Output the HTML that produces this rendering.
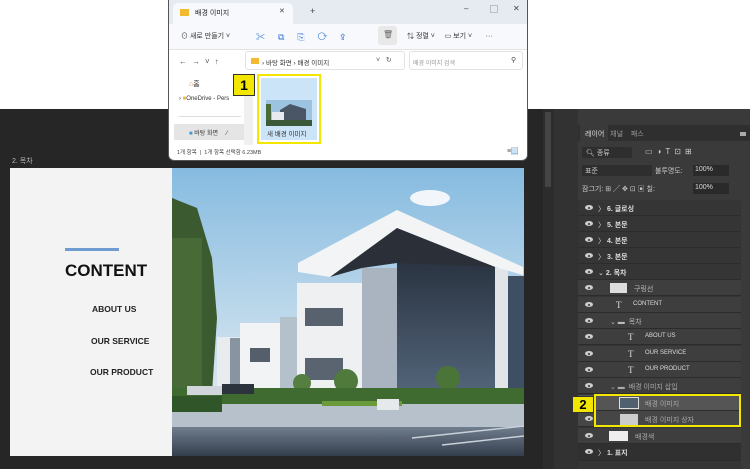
<!DOCTYPE html>
<html><head><meta charset="utf-8"><style>
*{margin:0;padding:0;box-sizing:border-box}
body{width:750px;height:469px;overflow:hidden;background:#fff;position:relative;font-family:"Liberation Sans","Noto Sans CJK KR",sans-serif}
.abs{position:absolute}
.dark{left:0;top:109px;width:750px;height:360px;background:#262626}
.t{position:absolute;white-space:nowrap}
.lay{position:absolute;left:578px;width:163px;height:16px;font-size:7px;color:#ddd;border-bottom:1px solid #2c2c2c}
.eye{position:absolute;left:7px;top:5px;width:8px;height:5px;border-radius:50%;background:#ccc}
.eye:after{content:"";position:absolute;left:3px;top:1.5px;width:2px;height:2px;background:#333;border-radius:50%}
</style></head><body>
<div class="abs dark"></div>
<div class="t" style="left:12px;top:156px;font-size:7px;color:#bbb">2. 목차</div>
<div class="abs" style="left:10px;top:168px;width:163px;height:288px;background:#f3f3f3"></div>
<div class="abs" style="left:65px;top:248px;width:54px;height:3px;background:#6f9bd0"></div>
<div class="t" style="left:65px;top:261px;font-size:17px;font-weight:bold;color:#111">CONTENT</div>
<div class="t" style="left:92px;top:304px;font-size:8.5px;font-weight:bold;color:#222">ABOUT US</div>
<div class="t" style="left:91px;top:336px;font-size:8.5px;font-weight:bold;color:#222">OUR SERVICE</div>
<div class="t" style="left:90px;top:367px;font-size:8.5px;font-weight:bold;color:#222">OUR PRODUCT</div>
<svg class="abs" style="left:172px;top:168px" width="352" height="288" viewBox="0 0 352 288">
<defs><linearGradient id="sky" x1="0" y1="0" x2="0" y2="1"><stop offset="0" stop-color="#86bbe0"/><stop offset="0.7" stop-color="#d2e3ef"/><stop offset="1" stop-color="#e4ecf2"/></linearGradient>
<linearGradient id="rd" x1="0" y1="0" x2="0" y2="1"><stop offset="0" stop-color="#6f7d8e"/><stop offset="1" stop-color="#343e4d"/></linearGradient>
<linearGradient id="gl" x1="0" y1="0" x2="0" y2="1"><stop offset="0" stop-color="#2a3442"/><stop offset="1" stop-color="#53657a"/></linearGradient></defs>
<rect width="352" height="288" fill="url(#sky)"/>
<ellipse cx="258" cy="30" rx="20" ry="8" fill="#f2f6fa"/>
<rect x="0" y="235" width="352" height="25" fill="#b6c1cb"/>
<rect x="0" y="259" width="352" height="29" fill="url(#rd)"/>
<polygon points="45,169 68,169 68,222 45,222" fill="#e9ecef"/>
<rect x="58" y="170" width="10" height="52" fill="#8894a0"/>
<rect x="68" y="155" width="40" height="66" fill="#f1f3f5"/>
<rect x="108" y="149" width="18" height="72" fill="#b4c0ca"/>
<rect x="78" y="180" width="20" height="14" fill="#555f6b"/>
<rect x="125" y="115" width="65" height="108" fill="#eef0f2"/>
<rect x="133" y="140" width="38" height="18" fill="#58626f"/>
<rect x="133" y="190" width="38" height="22" fill="#5a6470"/>
<rect x="190" y="100" width="35" height="125" fill="#a9b4c0"/>
<rect x="225" y="95" width="98" height="130" fill="url(#gl)"/>
<rect x="323" y="100" width="13" height="125" fill="#e1e5e8"/>
<rect x="336" y="108" width="16" height="117" fill="#3e4f63"/>
<polygon points="126,95 225,42 351,99 351,107 323,99 225,60 158,109 126,104" fill="#f3f4f5"/>
<polygon points="158,109 225,60 323,99 225,95 190,100" fill="#2b3038"/>
<polygon points="0,30 25,40 40,90 45,150 40,225 0,228" fill="#3b5a30"/>
<rect x="0" y="70" width="30" height="150" fill="#476a37"/>
<circle cx="174" cy="213" r="12" fill="#4f7a3c"/>
<circle cx="276" cy="210" r="12" fill="#4a7438"/>
<circle cx="130" cy="215" r="9" fill="#557f40"/>
<rect x="0" y="220" width="352" height="16" fill="#3f6a30"/>
<rect x="0" y="228" width="50" height="16" fill="#2f5528"/>
<rect x="150" y="233" width="80" height="5" fill="#6a9a3a"/>
<rect x="205" y="231" width="22" height="11" fill="#e6e9ec"/>
<rect x="15" y="218" width="35" height="9" fill="#d0d6dc"/>
<rect x="50" y="216" width="32" height="10" fill="#2d333c"/>
<path d="M240 270 L352 258 M270 277 L352 268" stroke="#c9d0d8" stroke-width="1.5"/>
</svg>
<div class="abs" style="left:543px;top:109px;width:11px;height:360px;background:#2c2c2c"></div>
<div class="abs" style="left:545px;top:112px;width:6px;height:75px;background:#444"></div>
<div class="abs" style="left:554px;top:109px;width:24px;height:360px;background:#323232"></div>
<div class="abs" style="left:578px;top:109px;width:172px;height:360px;background:#3a3a3a"></div>
<div class="abs" style="left:578px;top:125px;width:172px;height:16px;background:#2f2f2f"></div>
<div class="abs" style="left:580px;top:125px;width:28px;height:16px;background:#3a3a3a"></div>
<div class="t" style="left:585px;top:129px;font-size:7px;color:#ddd">레이어 &nbsp; <span style="color:#999">채널 &nbsp; &nbsp;패스</span></div>
<div class="abs" style="left:740px;top:132px;width:6px;height:4px;background:#aaa"></div>
<div class="abs" style="left:582px;top:147px;width:50px;height:11px;background:#2e2e2e;border-radius:2px"></div>
<div class="t" style="left:586px;top:148px;font-size:7px;color:#ccc">🔍︎ 종류</div>
<div class="t" style="left:645px;top:147px;font-size:8px;color:#ccc;letter-spacing:4px">▭◑T⊡⊞</div>
<div class="abs" style="left:582px;top:165px;width:70px;height:11px;background:#2e2e2e"></div>
<div class="t" style="left:585px;top:166px;font-size:7px;color:#ccc">표준</div>
<div class="t" style="left:655px;top:166px;font-size:7px;color:#ccc">불투명도:</div>
<div class="abs" style="left:693px;top:165px;width:36px;height:11px;background:#2a2a2a"></div>
<div class="t" style="left:695px;top:166px;font-size:7px;color:#ddd">100%</div>
<div class="t" style="left:582px;top:184px;font-size:7px;color:#ccc">잠그기: ⊞ ╱ ✥ ⊡ ▣ 칠:</div>
<div class="abs" style="left:693px;top:183px;width:36px;height:11px;background:#2a2a2a"></div>
<div class="t" style="left:695px;top:184px;font-size:7px;color:#ddd">100%</div>
<div class="abs" style="left:578px;top:200px;width:163px;height:269px;background:#353535"></div>

<div class="lay" style="top:200px"><i class="eye"></i><span class="t" style="left:20px;top:4px">〉 <b>6. 글로싱</b></span></div>
<div class="lay" style="top:216px"><i class="eye"></i><span class="t" style="left:20px;top:4px">〉 <b>5. 본문</b></span></div>
<div class="lay" style="top:232px"><i class="eye"></i><span class="t" style="left:20px;top:4px">〉 <b>4. 본문</b></span></div>
<div class="lay" style="top:248px"><i class="eye"></i><span class="t" style="left:20px;top:4px">〉 <b>3. 본문</b></span></div>
<div class="lay" style="top:264px"><i class="eye"></i><span class="t" style="left:20px;top:4px">⌄ <b>2. 목차</b></span></div>
<div class="lay" style="top:280px;background:#3e3e3e"><i class="eye"></i><span class="abs" style="left:32px;top:3px;width:17px;height:10px;background:#ddd"></span><span class="t" style="left:56px;top:4px;color:#bbb">구링선</span></div>
<div class="lay" style="top:297px;background:#3e3e3e"><i class="eye"></i><span class="t" style="left:38px;top:3px;font-size:9px;font-family:'Liberation Serif',serif">T</span><span class="t" style="left:55px;top:4px;font-size:6px">CONTENT</span></div>
<div class="lay" style="top:313px;background:#3e3e3e"><i class="eye"></i><span class="t" style="left:32px;top:4px;color:#bbb">⌄ ▬ &nbsp;목차</span></div>
<div class="lay" style="top:329px;background:#3e3e3e"><i class="eye"></i><span class="t" style="left:50px;top:3px;font-size:9px;font-family:'Liberation Serif',serif">T</span><span class="t" style="left:67px;top:4px;font-size:6px">ABOUT US</span></div>
<div class="lay" style="top:346px;background:#3e3e3e"><i class="eye"></i><span class="t" style="left:50px;top:3px;font-size:9px;font-family:'Liberation Serif',serif">T</span><span class="t" style="left:67px;top:4px;font-size:6px">OUR SERVICE</span></div>
<div class="lay" style="top:362px;background:#3e3e3e"><i class="eye"></i><span class="t" style="left:50px;top:3px;font-size:9px;font-family:'Liberation Serif',serif">T</span><span class="t" style="left:67px;top:4px;font-size:6px">OUR PRODUCT</span></div>
<div class="lay" style="top:378px;background:#3e3e3e"><i class="eye"></i><span class="t" style="left:32px;top:4px;color:#aaa">⌄ ▬ &nbsp;배경 이미지 삽입</span></div>
<div class="lay" style="top:395px;background:#555"><span class="abs" style="left:41px;top:2px;width:20px;height:12px;background:#50606e;border:1px solid #ddd"></span><span class="t" style="left:67px;top:4px;color:#aaa">배경 이미지</span></div>
<div class="lay" style="top:411px;background:#464646"><i class="eye"></i><span class="abs" style="left:42px;top:3px;width:18px;height:11px;background:#ccc"></span><span class="t" style="left:67px;top:4px;color:#aaa">배경 이미지 상자</span></div>
<div class="lay" style="top:428px;background:#3e3e3e"><i class="eye"></i><span class="abs" style="left:31px;top:3px;width:19px;height:10px;background:#eee"></span><span class="t" style="left:57px;top:4px;color:#aaa">배경색</span></div>
<div class="lay" style="top:444px;background:#303030;height:17px"><i class="eye"></i><span class="t" style="left:20px;top:4px">〉 <b>1. 표지</b></span></div>
<div class="abs" style="left:594px;top:394px;width:147px;height:33px;border:2px solid #f3e600"></div>
<div class="abs" style="left:572px;top:396px;width:22px;height:17px;background:#f3e600;border:1px solid #333;font-weight:bold;font-size:13px;text-align:center;line-height:16px">2</div>

<div class="abs" style="left:168px;top:0;width:360px;height:161px;background:#fff;border:1px solid #555;border-top:none;border-radius:0 0 6px 6px;overflow:hidden">
 <div class="abs" style="left:0;top:0;width:360px;height:24px;background:#e6ebf1"></div>
 <div class="abs" style="left:4px;top:3px;width:120px;height:21px;background:#f7f9fc;border-radius:5px 5px 0 0"></div>
 <div class="abs" style="left:11px;top:9px;width:9px;height:7px;background:#f2b931"></div>
 <div class="t" style="left:26px;top:8px;font-size:7px;color:#222">배경 이미지</div>
 <div class="t" style="left:110px;top:7px;font-size:7px;color:#444">✕</div>
 <div class="t" style="left:141px;top:6px;font-size:9px;color:#444">+</div>
 <div class="t" style="left:295px;top:4px;font-size:8px;color:#444">–</div>
 <div class="t" style="left:321px;top:4px;font-size:8px;color:#444">▢</div>
 <div class="t" style="left:344px;top:4px;font-size:8px;color:#444">✕</div>
 <div class="abs" style="left:0;top:24px;width:360px;height:26px;background:#f7f9fc;border-bottom:1px solid #e3e3e3"></div>
 <div class="t" style="left:12px;top:31px;font-size:7px;color:#333">⊙ 새로 만들기 ˅</div>
 <div class="abs" style="left:209px;top:26px;width:19px;height:19px;background:#e8e8e8;border-radius:3px"></div>
 <div class="t" style="left:87px;top:30px;font-size:9px;color:#3a7bd5;letter-spacing:13px">✂⧉⎘⟳⇪</div>
 <div class="t" style="left:214px;top:30px;font-size:8px;color:#666">🗑︎</div>
 <div class="t" style="left:238px;top:31px;font-size:7px;color:#333">⇅ 정렬 ˅ &nbsp; &nbsp; ▭ 보기 ˅ &nbsp; &nbsp; &nbsp; ···</div>
 <div class="t" style="left:10px;top:57px;font-size:8px;color:#555;letter-spacing:5px">←→˅↑</div>
 <div class="abs" style="left:76px;top:51px;width:160px;height:19px;border:1px solid #e3e3e3;border-radius:3px"></div>
 <div class="abs" style="left:82px;top:58px;width:8px;height:6px;background:#f2b931"></div>
 <div class="t" style="left:93px;top:57px;font-size:6.5px;color:#333">› 바탕 화면 › 배경 이미지</div>
 <div class="t" style="left:207px;top:56px;font-size:7px;color:#555">˅ &nbsp; ↻</div>
 <div class="abs" style="left:240px;top:51px;width:114px;height:19px;border:1px solid #e3e3e3;border-radius:3px"></div>
 <div class="t" style="left:244px;top:58px;font-size:6px;color:#999">배경 이미지 검색</div>
 <div class="t" style="left:342px;top:56px;font-size:7px;color:#444">⚲</div>
 <div class="t" style="left:20px;top:79px;font-size:7px;color:#333"><span style="color:#e07b39">⌂</span>홈</div>
 <div class="t" style="left:10px;top:96px;font-size:6px;color:#333">› <span style="color:#f2b931">■</span>OneDrive - Pers</div>
 <div class="abs" style="left:10px;top:116px;width:62px;height:1px;background:#ddd"></div>
 <div class="abs" style="left:5px;top:124px;width:70px;height:16px;background:#e5e5e5"></div>
 <div class="t" style="left:20px;top:128px;font-size:6px;color:#333"><span style="color:#3a9ad9">■</span> 바탕 화면 &nbsp; &nbsp; ⁄</div>
 <div class="abs" style="left:75px;top:75px;width:9px;height:70px;background:#f0f0f0"></div>
 <div class="t" style="left:8px;top:148px;font-size:5.5px;color:#444">1개 항목 &nbsp;|&nbsp; 1개 항목 선택함 6.23MB</div>
 <div class="t" style="left:338px;top:146px;font-size:7px;color:#555">≡<span style="background:#cde4f7">▢</span></div>
 <div class="abs" style="left:88px;top:74px;width:64px;height:70px;border:2px solid #f3e600"></div>
 <div class="abs" style="left:92px;top:78px;width:56px;height:62px;background:#cce4f7"></div>
 <svg class="abs" style="left:97px;top:100px" width="46" height="26"><rect width="46" height="26" fill="#9cc4e0"/><polygon points="14,10 24,4 40,9 40,22 14,22" fill="#4a5666"/><rect x="6" y="12" width="12" height="10" fill="#e7eaee"/><rect x="0" y="4" width="5" height="18" fill="#496b3a"/><rect y="20" width="46" height="6" fill="#3c5a3a"/></svg>
 <div class="t" style="left:98px;top:128px;font-size:6.5px;color:#333">새 배경 이미지</div>
 <div class="abs" style="left:64px;top:74px;width:22px;height:22px;background:#f3e600;border:1px solid #333;font-weight:bold;font-size:14px;text-align:center;line-height:21px">1</div>
</div>
</body></html>
